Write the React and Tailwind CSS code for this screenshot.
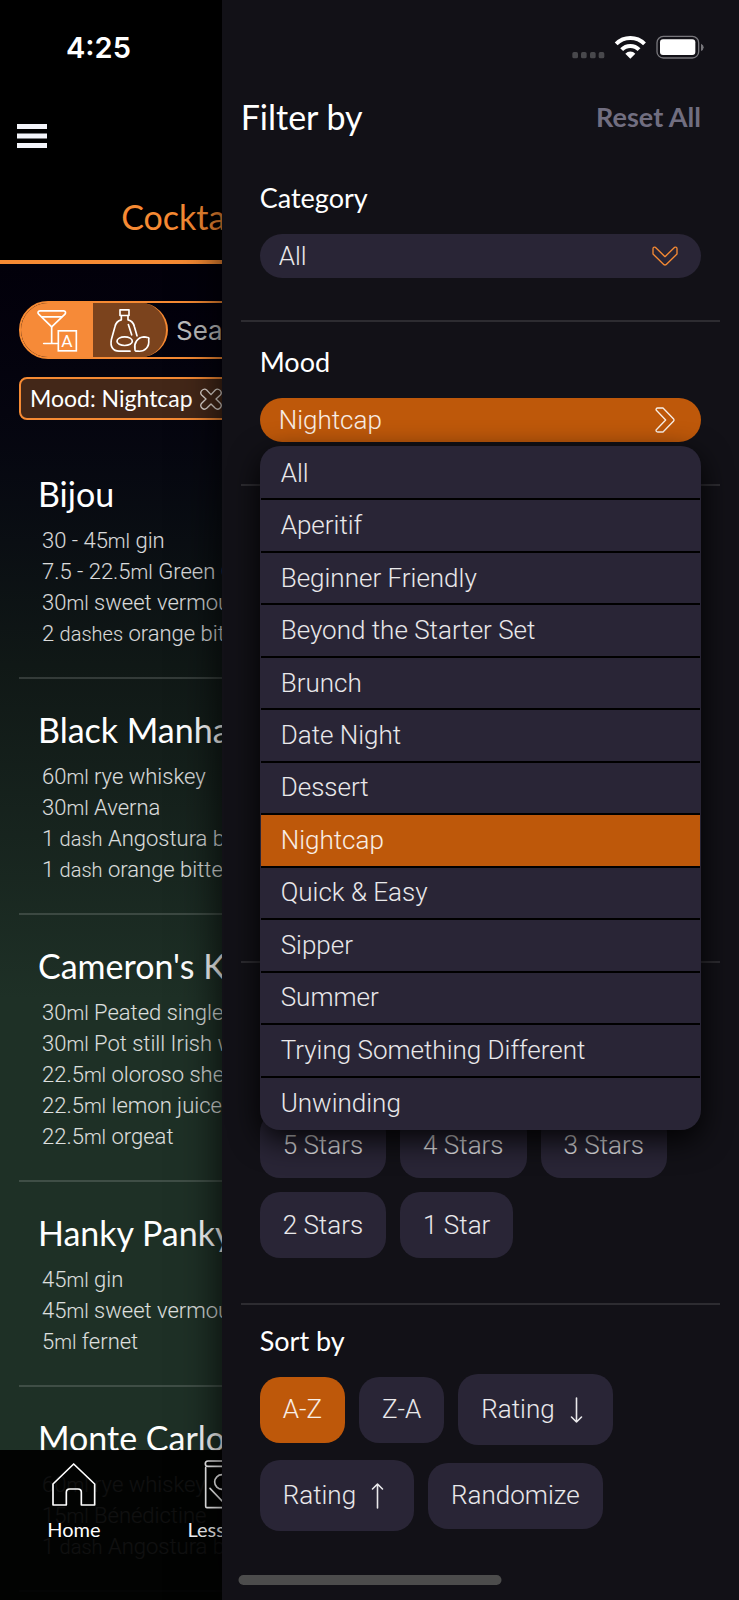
import { useState } from 'react'

const cocktails = [
  {
    name: 'Bijou',
    ingredients: [
      ['30 - 45', 'ml', 'gin'],
      ['7.5 - 22.5', 'ml', 'Green Chartreuse'],
      ['30', 'ml', 'sweet vermouth'],
      ['2 ', 'dashes', 'orange bitters'],
    ],
  },
  {
    name: 'Black Manhattan',
    ingredients: [
      ['60', 'ml', 'rye whiskey'],
      ['30', 'ml', 'Averna'],
      ['1 ', 'dash', 'Angostura bitters'],
      ['1 ', 'dash', 'orange bitters'],
    ],
  },
  {
    name: "Cameron's Kick",
    ingredients: [
      ['30', 'ml', 'Peated single malt'],
      ['30', 'ml', 'Pot still Irish whiskey'],
      ['22.5', 'ml', 'oloroso sherry'],
      ['22.5', 'ml', 'lemon juice'],
      ['22.5', 'ml', 'orgeat'],
    ],
  },
  {
    name: 'Hanky Panky',
    ingredients: [
      ['45', 'ml', 'gin'],
      ['45', 'ml', 'sweet vermouth'],
      ['5', 'ml', 'fernet'],
    ],
  },
  {
    name: 'Monte Carlo',
    ingredients: [
      ['60', 'ml', 'rye whiskey'],
      ['15', 'ml', 'Bénédictine'],
      ['1 ', 'dash', 'Angostura bitters'],
    ],
  },
]

const moods = [
  'All',
  'Aperitif',
  'Beginner Friendly',
  'Beyond the Starter Set',
  'Brunch',
  'Date Night',
  'Dessert',
  'Nightcap',
  'Quick & Easy',
  'Sipper',
  'Summer',
  'Trying Something Different',
  'Unwinding',
]

const ratings = ['5 Stars', '4 Stars', '3 Stars', '2 Stars', '1 Star']

const sorts = [
  { id: 'az', label: 'A-Z' },
  { id: 'za', label: 'Z-A' },
  { id: 'down', label: 'Rating', arrow: 'down' },
  { id: 'up', label: 'Rating', arrow: 'up' },
  { id: 'random', label: 'Randomize' },
]

function MenuIcon() {
  return (
    <svg width="30" height="24" viewBox="0 0 30 24" fill="#f4f5fb" aria-hidden="true">
      <rect width="30" height="5" />
      <rect y="9.5" width="30" height="5" />
      <rect y="19" width="30" height="5" />
    </svg>
  )
}

function GlassIcon() {
  return (
    <svg width="42" height="45" viewBox="108 84 126 134" fill="none" stroke="#fff" strokeWidth="5" strokeLinejoin="round" strokeLinecap="round" aria-hidden="true">
      <path d="M120 92h71c6 0 7 6 4 10l-40 38-39-38c-4-4-2-10 4-10z" />
      <path d="M126 110h59M155 140v50M131 190h41" />
      <rect x="175" y="152" width="54" height="60" strokeLinejoin="miter" />
      <text x="201" y="201" textAnchor="middle" fontFamily="Roboto, sans-serif" fontSize="52" fontWeight="400" fill="#fff" stroke="none">A</text>
    </svg>
  )
}

function BottleIcon() {
  return (
    <svg width="42" height="45" viewBox="324 82 126 134" fill="none" stroke="#fff" strokeWidth="5" strokeLinejoin="round" strokeLinecap="round" aria-hidden="true">
      <rect x="357" y="87" width="27" height="17" />
      <path d="M361 104v13c-11 3-17 10-19 20l-11 40c-4 20 5 34 23 34h33" />
      <path d="M381 104v13c11 3 17 10 19 20l8 28" />
      <path d="M382 131l10 31" />
      <ellipse cx="371" cy="181" rx="23" ry="13" />
      <path d="M440 170c5 0 4 4 3 7 3 20-10 36-32 34-5 0-10 1-9-5-4-18 7-37 27-38 4 0 7 2 11 2z" />
    </svg>
  )
}

function CloseIcon() {
  return (
    <svg width="22" height="22" viewBox="597 322 66 66" fill="none" stroke="#e4dcd6" strokeWidth="4" strokeLinejoin="round" aria-hidden="true">
      <path d="M617 328l13 14 13-14c9-8 24 6 15 15l-13 12 13 13c9 9-6 23-15 15l-13-13-13 13c-9 8-24-6-15-15l13-13-13-12c-9-9 6-23 15-15z" />
    </svg>
  )
}

function Chevron({ className }) {
  return (
    <svg width="26" height="20" viewBox="0 0 78 60" fill="none" stroke="currentColor" strokeWidth="4" strokeLinejoin="round" className={className} aria-hidden="true">
      <path d="M3 8c0-4 4-6 7-4l29 28L68 4c3-2 7 0 7 4v16L42 56q-3 2-6 0L3 24z" />
    </svg>
  )
}

function ArrowIcon({ className }) {
  return (
    <svg width="27" height="28" viewBox="0 0 27 28" fill="none" stroke="currentColor" strokeWidth="1.6" strokeLinecap="round" strokeLinejoin="round" className={className} aria-hidden="true">
      <path d="M13.5 2v24M8.5 21l5 5 5-5" />
    </svg>
  )
}

function HomeIcon() {
  return (
    <svg width="44" height="43" viewBox="158 245 132 129" fill="none" stroke="#fff" strokeWidth="5" strokeLinejoin="round" aria-hidden="true">
      <path d="M161 371v-63l62-60 63 60v63h-40v-38q0-10-10-10h-25q-10 0-10 10v38z" />
    </svg>
  )
}

function LessonsIcon() {
  return (
    <svg width="36" height="49" viewBox="612 237 108 147" fill="none" stroke="#fff" strokeWidth="5" strokeLinejoin="round" strokeLinecap="round" aria-hidden="true">
      <path d="M716 240h-92q-8 0-8 8t8 8h92M617 260v116q0 4 4 4h95V256" />
      <circle cx="666" cy="303" r="22" />
      <path d="M630 322l36 38 36-38" />
    </svg>
  )
}

function StatusIcons() {
  return (
    <svg width="132" height="24" viewBox="98 104 396 72" role="img" aria-label="Wi-Fi and battery">
      <g fill="#48484c">
        <rect x="99" y="155" width="17" height="19" rx="5" />
        <rect x="125" y="155" width="17" height="19" rx="5" />
        <rect x="152" y="155" width="17" height="19" rx="5" />
        <rect x="178" y="155" width="17" height="19" rx="5" />
      </g>
      <g fill="none" stroke="#fff" strokeWidth="12">
        <path d="M230.500 130.500a60 60 0 0 1 85 0" />
        <path d="M247 148a36 36 0 0 1 52 0" />
      </g>
      <path d="M273 175l-15-15a21 21 0 0 1 30 0z" fill="#fff" />
      <rect x="353" y="108" width="125" height="65" rx="19" fill="none" stroke="#77767b" strokeWidth="4" />
      <rect x="362" y="117" width="106" height="47" rx="9" fill="#fff" />
      <path d="M485 130q8 3 8 11t-8 11z" fill="#77767b" />
    </svg>
  )
}

function CocktailCard({ name, ingredients }) {
  return (
    <li className="border-b-2 border-white/15 pt-[31px] pb-7 pl-[19px] whitespace-nowrap">
      <h2 className="font-['Lato',sans-serif] text-[34px] leading-10 text-white">{name}</h2>
      <ul className="mt-[11px] pl-1 text-[22px] leading-[31px] font-light text-white/85">
        {ingredients.map(([amount, unit, item]) => (
          <li key={item} className="h-[31px]">
            {amount}
            <span className="text-[20px]">{unit}</span> {item}
          </li>
        ))}
      </ul>
    </li>
  )
}

function CocktailPage() {
  return (
    <div className="relative flex min-h-screen w-screen flex-col bg-black">
      <header className="border-b-4 border-[#f68a33]">
        <div className="flex h-24 items-center pl-[66px] font-['Inter',sans-serif] text-[29px] font-semibold text-white">4:25</div>
        <button type="button" aria-label="Menu" className="mt-7 ml-[17px] block">
          <MenuIcon />
        </button>
        <nav className="mt-[49px] pb-[23px]">
          <a href="#cocktails" className="block w-1/2 pl-2 text-center font-['Lato',sans-serif] text-[34px] leading-10 text-[#f68a33]">
            Cocktails
          </a>
        </nav>
      </header>

      <main className="flex-1 bg-linear-to-b from-[#02000a] via-[#101816] via-30% to-[#1e3026] to-55% px-[19px] pt-[37px]">
        <div className="flex h-[58px] overflow-hidden rounded-full border-2 border-[#f68a33]">
          <div className="flex w-[147px] shrink-0 overflow-hidden rounded-r-full border-r-2 border-[#f68a33] bg-[#7b431d]">
            <button type="button" aria-label="Search by name" className="flex w-[72px] items-center justify-center bg-[#f68a38]">
              <GlassIcon />
            </button>
            <button type="button" aria-label="Search by ingredient" className="flex flex-1 items-center justify-center">
              <BottleIcon />
            </button>
          </div>
          <input
            type="search"
            aria-label="Search"
            placeholder="Search"
            className="min-w-0 flex-1 bg-transparent pl-2 font-['Inter',sans-serif] text-[26px] font-normal text-white outline-none placeholder:text-[#bdbdbd]"
          />
        </div>
        <button
          type="button"
          className="mt-[18px] flex h-[43px] items-center gap-[7px] rounded-lg border-2 border-[#f68a33] bg-[#432718] px-[9px] font-['Lato',sans-serif] text-[23px] whitespace-nowrap text-white"
        >
          Mood: Nightcap
          <CloseIcon />
        </button>
        <ul className="mt-[23px]">
          {cocktails.map((c) => (
            <CocktailCard key={c.name} {...c} />
          ))}
        </ul>
      </main>

      <nav className="absolute inset-x-0 bottom-0 flex h-[150px] bg-black/93 pt-[10px] font-['Lato',sans-serif] text-[20px] text-white">
        <a href="#home" className="flex w-1/5 flex-col items-center">
          <span className="flex h-12 items-center">
            <HomeIcon />
          </span>
          <span className="mt-[7px] leading-7">Home</span>
        </a>
        <a href="#lessons" className="flex w-1/5 flex-col items-center">
          <span className="flex h-12 items-center">
            <LessonsIcon />
          </span>
          <span className="mt-[7px] leading-7">Lessons</span>
        </a>
      </nav>
    </div>
  )
}

function Chip({ active, onClick, label, arrow }) {
  return (
    <button
      type="button"
      aria-pressed={active}
      onClick={onClick}
      className={`flex items-center gap-2 rounded-[20px] px-[23px] ${arrow ? 'h-[71px]' : 'h-[66px]'} ${
        active ? 'bg-[#be580a]' : 'bg-[#292536]'
      }`}
    >
      {label}
      {arrow && <ArrowIcon className={arrow === 'up' ? 'rotate-180' : ''} />}
    </button>
  )
}

function FilterDrawer() {
  const [category, setCategory] = useState('All')
  const [mood, setMood] = useState('Nightcap')
  const [open, setOpen] = useState(true)
  const [rating, setRating] = useState(null)
  const [sort, setSort] = useState('az')

  const resetAll = () => {
    setCategory('All')
    setMood('All')
    setRating(null)
    setSort('az')
  }

  return (
    <aside className="relative z-10 w-[70%] bg-[#121117] px-[19px] text-[26px] font-light text-white/90 shadow-[0_0_40px_rgba(0,0,0,0.8)]">
      <div className="flex h-24 items-center justify-end pr-4 pb-[3px]">
        <StatusIcons />
      </div>
      <div className="flex items-center justify-between pr-[19px] font-['Lato',sans-serif]">
        <h1 className="text-[34px] leading-[42px] font-normal text-white">Filter by</h1>
        <button type="button" onClick={resetAll} className="text-[27px] leading-[42px] font-bold text-[#716e80]">
          Reset All
        </button>
      </div>

      <section className="mt-5 border-b-2 border-[#2d2c31] px-[19px] pt-6 pb-[42px]">
        <label htmlFor="category" className="block font-['Lato',sans-serif] text-[27px] leading-8 font-normal text-white">
          Category
        </label>
        <div className="relative mt-5">
          <select
            id="category"
            value={category}
            onChange={(e) => setCategory(e.target.value)}
            className="h-11 w-full appearance-none rounded-full bg-[#292536] px-[19px]"
          >
            <option>All</option>
          </select>
          <Chevron className="pointer-events-none absolute top-3 right-[23px] text-[#f68a33]" />
        </div>
      </section>

      <section className="border-b-2 border-[#2d2c31] px-[19px] pt-6 pb-[42px]">
        <h2 id="mood-label" className="font-['Lato',sans-serif] text-[27px] leading-8 font-normal text-white">
          Mood
        </h2>
        <div className="relative mt-5">
          <button
            type="button"
            aria-haspopup="listbox"
            aria-expanded={open}
            aria-labelledby="mood-label mood-value"
            onClick={() => setOpen(!open)}
            className="flex h-11 w-full items-center justify-between rounded-full bg-[#be580a] pr-[23px] pl-[19px]"
          >
            <span id="mood-value">{mood}</span>
            <Chevron className="-rotate-90" />
          </button>
          {open && (
            <ul
              role="listbox"
              aria-labelledby="mood-label"
              className="absolute inset-x-0 top-full z-20 mt-1 grid h-[684px] auto-rows-fr overflow-hidden rounded-[20px] bg-[#292536] px-px pt-0.5 shadow-[0_10px_30px_rgba(0,0,0,0.9)]"
            >
              {moods.map((m) => (
                <li
                  key={m}
                  role="option"
                  aria-selected={m === mood}
                  onClick={() => setMood(m)}
                  className={`flex cursor-pointer items-center border-b-2 border-black px-5 last:border-b-0 ${m === mood ? 'bg-[#be580a]' : ''}`}
                >
                  {m}
                </li>
              ))}
            </ul>
          )}
        </div>
      </section>

      <div className="h-[477px] border-b-2 border-[#2d2c31]" />

      <section aria-label="Rating" className="flex flex-wrap gap-[14px] border-b-2 border-[#2d2c31] px-[19px] pt-[149px] pb-[45px]">
        {ratings.map((r) => (
          <Chip key={r} label={r} active={rating === r} onClick={() => setRating(r)} />
        ))}
      </section>

      <section className="px-[19px] pt-5">
        <h2 className="font-['Lato',sans-serif] text-[27px] leading-8 font-normal text-white">Sort by</h2>
        <div className="mt-[17px] flex flex-wrap items-center gap-x-[14px] gap-y-[15px]">
          {sorts.map((s) => (
            <Chip key={s.id} label={s.label} arrow={s.arrow} active={sort === s.id} onClick={() => setSort(s.id)} />
          ))}
        </div>
      </section>
    </aside>
  )
}

export default function App() {
  return (
    <div className="relative flex min-h-screen overflow-hidden bg-black font-['Roboto',sans-serif]">
      <div className="w-[30%] overflow-hidden">
        <CocktailPage />
      </div>
      <FilterDrawer />
      <div className="absolute bottom-[15px] left-1/2 z-30 h-[10px] w-[263px] -translate-x-1/2 rounded-full bg-[#4c4c4c]" />
    </div>
  )
}
